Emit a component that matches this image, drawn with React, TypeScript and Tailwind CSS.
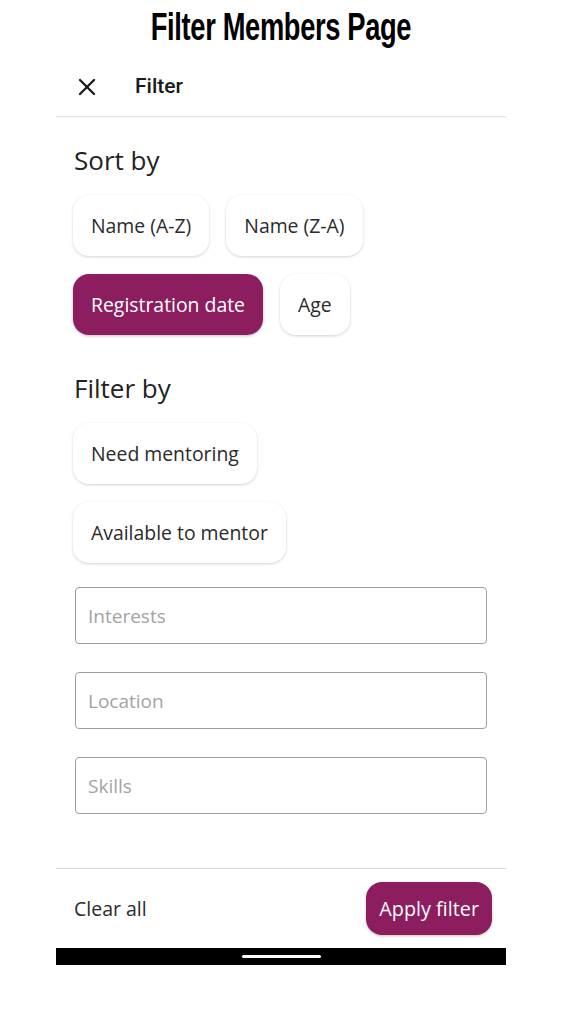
import { X } from "lucide-react";

const body = { fontFamily: '"Open Sans", "Noto Sans", sans-serif' };

function Chip({ label, active = false }: { label: string; active?: boolean }) {
  return (
    <button
      className={`h-[61px] rounded-[16px] px-[18px] text-[19.4px] ${
        active
          ? "bg-[#8c1d5f] text-white shadow-[0_1px_3px_rgba(0,0,0,0.25)]"
          : "bg-white text-[#2b2b2b] shadow-[0_1px_3px_rgba(0,0,0,0.18)]"
      }`}
    >
      {label}
    </button>
  );
}

function Field({ placeholder }: { placeholder: string }) {
  return (
    <input
      placeholder={placeholder}
      className="h-[57px] w-full rounded-[4px] border border-[#9e9e9e] px-[12px] text-[19px] text-[#333] placeholder:text-[#a3a3a3] outline-none"
    />
  );
}

export default function App() {
  return (
    <div className="min-h-[1023px] w-full bg-white" style={body}>
      <div className="flex h-[52px] items-center justify-center">
        <h1
          className="scale-x-[0.7] text-[39px] font-bold leading-none tracking-[-0.5px] text-black"
          style={{ fontFamily: '"Liberation Sans", Arial, sans-serif' }}
        >
          Filter Members Page
        </h1>
      </div>

      <div className="mx-auto w-[450px]">
        <div className="flex h-[65px] items-center border-b border-[#e4e4e4] pt-[5px] shadow-[0_1px_1px_rgba(0,0,0,0.04)]">
          <X size={28} strokeWidth={2} className="ml-[17px] text-[#1a1a1a]" />
          <span
            className="ml-[34px] text-[21px] font-medium text-[#1a1a1a]"
            style={{ fontFamily: "Roboto, sans-serif" }}
          >
            Filter
          </span>
        </div>

        <div className="px-[17px]">
          <h2 className="mt-[27px] pl-[1px] text-[26px] leading-[32px] text-[#222]">Sort by</h2>
          <div className="mt-[19px] flex flex-wrap gap-x-[17px] gap-y-[18px]">
            <Chip label="Name (A-Z)" />
            <Chip label="Name (Z-A)" />
            <Chip label="Registration date" active />
            <Chip label="Age" />
          </div>

          <h2 className="mt-[37px] pl-[1px] text-[26px] leading-[32px] text-[#222]">Filter by</h2>
          <div className="mt-[19px] flex flex-col items-start gap-[18px]">
            <Chip label="Need mentoring" />
            <Chip label="Available to mentor" />
          </div>

          <div className="mt-[24px] flex flex-col gap-[28px] px-[2px]">
            <Field placeholder="Interests" />
            <Field placeholder="Location" />
            <Field placeholder="Skills" />
          </div>
        </div>

        <div className="mt-[54px] border-t border-[#d6d6d6]">
          <div className="flex items-center justify-between pl-[18px] pr-[14px] pt-[13px]">
            <button className="text-[19.5px] text-[#2b2b2b]">Clear all</button>
            <button className="h-[53px] rounded-[16px] bg-[#8c1d5f] px-[13px] text-[19.8px] text-white shadow-[0_1px_3px_rgba(0,0,0,0.25)]">
              Apply filter
            </button>
          </div>
          <div className="mt-[13px] flex h-[17px] items-center justify-center bg-black">
            <div className="h-[3px] w-[79px] rounded-full bg-white" />
          </div>
        </div>
      </div>
    </div>
  );
}
